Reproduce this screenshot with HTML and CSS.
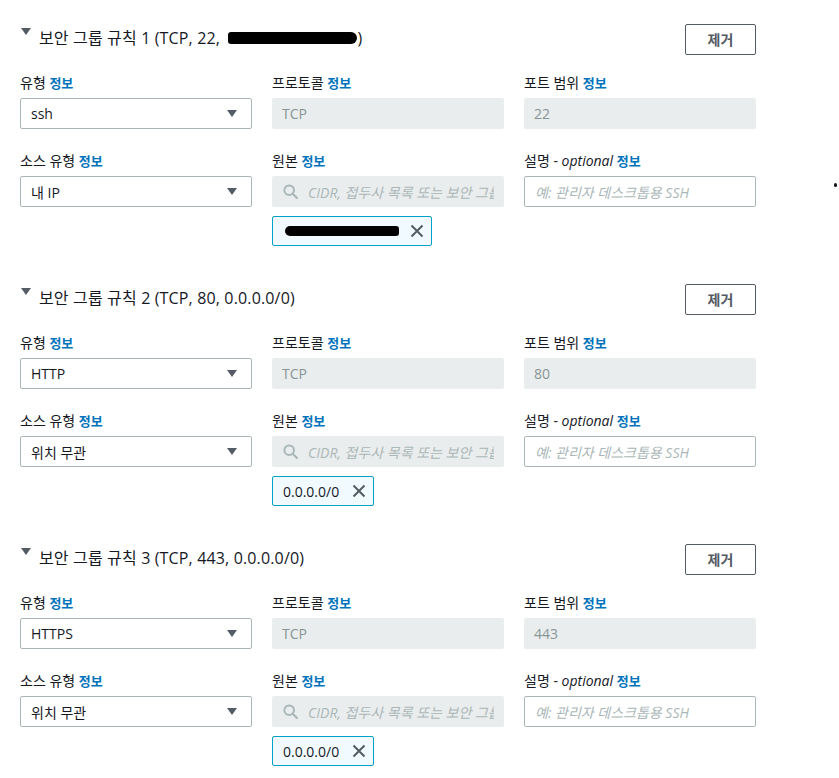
FILE: index.html
```html
<!DOCTYPE html>
<html lang="ko">
<head>
<meta charset="utf-8">
<title>보안 그룹 규칙</title>
<link rel="stylesheet" href="styles.css">
</head>
<body>
<div class="page">

  <section class="rule">
    <div class="rule-head">
      <div class="rule-title"><span class="caret"></span><span class="title-text">보안 그룹 규칙 1 (TCP, 22, <span class="redact redact-title"></span>)</span></div>
      <button class="btn">제거</button>
    </div>
    <div class="grid">
      <div class="field">
        <div class="label">유형 <span class="info">정보</span></div>
        <div class="select"><span class="value">ssh</span><svg class="dd" width="10" height="7" viewBox="0 0 10 7"><path d="M0 0H10L5 7Z" fill="#545b64"/></svg></div>
      </div>
      <div class="field">
        <div class="label">프로토콜 <span class="info">정보</span></div>
        <div class="disabled">TCP</div>
      </div>
      <div class="field">
        <div class="label">포트 범위 <span class="info">정보</span></div>
        <div class="disabled">22</div>
      </div>
      <div class="field">
        <div class="label">소스 유형 <span class="info">정보</span></div>
        <div class="select"><span class="value">내 IP</span><svg class="dd" width="10" height="7" viewBox="0 0 10 7"><path d="M0 0H10L5 7Z" fill="#545b64"/></svg></div>
      </div>
      <div class="field">
        <div class="label">원본 <span class="info">정보</span></div>
        <div class="search"><svg class="mag" width="15" height="15" viewBox="0 0 15 15"><circle cx="6.2" cy="6.2" r="4.8" fill="none" stroke="#aab7b8" stroke-width="2"/><path d="M9.7 9.7L14 14" stroke="#aab7b8" stroke-width="2.2" stroke-linecap="round"/></svg><span class="ph">CIDR, 접두사 목록 또는 보안 그룹</span></div>
        <div class="token token-wide"><span class="redact redact-token"></span><svg class="x" width="14" height="14" viewBox="0 0 14 14"><path d="M1.5 1.5L12.5 12.5M12.5 1.5L1.5 12.5" stroke="#545b64" stroke-width="2"/></svg></div>
      </div>
      <div class="field">
        <div class="label">설명 - <i>optional</i> <span class="info">정보</span></div>
        <div class="text-input"><span class="ph">예: 관리자 데스크톱용 SSH</span></div>
      </div>
    </div>
  </section>

  <section class="rule">
    <div class="rule-head">
      <div class="rule-title"><span class="caret"></span><span class="title-text">보안 그룹 규칙 2 (TCP, 80, 0.0.0.0/0)</span></div>
      <button class="btn">제거</button>
    </div>
    <div class="grid">
      <div class="field">
        <div class="label">유형 <span class="info">정보</span></div>
        <div class="select"><span class="value">HTTP</span><svg class="dd" width="10" height="7" viewBox="0 0 10 7"><path d="M0 0H10L5 7Z" fill="#545b64"/></svg></div>
      </div>
      <div class="field">
        <div class="label">프로토콜 <span class="info">정보</span></div>
        <div class="disabled">TCP</div>
      </div>
      <div class="field">
        <div class="label">포트 범위 <span class="info">정보</span></div>
        <div class="disabled">80</div>
      </div>
      <div class="field">
        <div class="label">소스 유형 <span class="info">정보</span></div>
        <div class="select"><span class="value">위치 무관</span><svg class="dd" width="10" height="7" viewBox="0 0 10 7"><path d="M0 0H10L5 7Z" fill="#545b64"/></svg></div>
      </div>
      <div class="field">
        <div class="label">원본 <span class="info">정보</span></div>
        <div class="search"><svg class="mag" width="15" height="15" viewBox="0 0 15 15"><circle cx="6.2" cy="6.2" r="4.8" fill="none" stroke="#aab7b8" stroke-width="2"/><path d="M9.7 9.7L14 14" stroke="#aab7b8" stroke-width="2.2" stroke-linecap="round"/></svg><span class="ph">CIDR, 접두사 목록 또는 보안 그룹</span></div>
        <div class="token"><span class="token-text">0.0.0.0/0</span><svg class="x" width="14" height="14" viewBox="0 0 14 14"><path d="M1.5 1.5L12.5 12.5M12.5 1.5L1.5 12.5" stroke="#545b64" stroke-width="2"/></svg></div>
      </div>
      <div class="field">
        <div class="label">설명 - <i>optional</i> <span class="info">정보</span></div>
        <div class="text-input"><span class="ph">예: 관리자 데스크톱용 SSH</span></div>
      </div>
    </div>
  </section>

  <section class="rule">
    <div class="rule-head">
      <div class="rule-title"><span class="caret"></span><span class="title-text">보안 그룹 규칙 3 (TCP, 443, 0.0.0.0/0)</span></div>
      <button class="btn">제거</button>
    </div>
    <div class="grid">
      <div class="field">
        <div class="label">유형 <span class="info">정보</span></div>
        <div class="select"><span class="value">HTTPS</span><svg class="dd" width="10" height="7" viewBox="0 0 10 7"><path d="M0 0H10L5 7Z" fill="#545b64"/></svg></div>
      </div>
      <div class="field">
        <div class="label">프로토콜 <span class="info">정보</span></div>
        <div class="disabled">TCP</div>
      </div>
      <div class="field">
        <div class="label">포트 범위 <span class="info">정보</span></div>
        <div class="disabled">443</div>
      </div>
      <div class="field">
        <div class="label">소스 유형 <span class="info">정보</span></div>
        <div class="select"><span class="value">위치 무관</span><svg class="dd" width="10" height="7" viewBox="0 0 10 7"><path d="M0 0H10L5 7Z" fill="#545b64"/></svg></div>
      </div>
      <div class="field">
        <div class="label">원본 <span class="info">정보</span></div>
        <div class="search"><svg class="mag" width="15" height="15" viewBox="0 0 15 15"><circle cx="6.2" cy="6.2" r="4.8" fill="none" stroke="#aab7b8" stroke-width="2"/><path d="M9.7 9.7L14 14" stroke="#aab7b8" stroke-width="2.2" stroke-linecap="round"/></svg><span class="ph">CIDR, 접두사 목록 또는 보안 그룹</span></div>
        <div class="token"><span class="token-text">0.0.0.0/0</span><svg class="x" width="14" height="14" viewBox="0 0 14 14"><path d="M1.5 1.5L12.5 12.5M12.5 1.5L1.5 12.5" stroke="#545b64" stroke-width="2"/></svg></div>
      </div>
      <div class="field">
        <div class="label">설명 - <i>optional</i> <span class="info">정보</span></div>
        <div class="text-input"><span class="ph">예: 관리자 데스크톱용 SSH</span></div>
      </div>
    </div>
  </section>

  <span class="speck"></span>
</div>
</body>
</html>
```

FILE: styles.css
```css
html, body {
  margin: 0;
  padding: 0;
  background: #ffffff;
}

body {
  font-family: "Open Sans", "Noto Sans CJK KR", sans-serif;
  color: #16191f;
  font-size: 14px;
}

.page {
  position: relative;
  padding: 24px 0 0 20px;
  width: 736px;
  display: flex;
  flex-direction: column;
  gap: 38px;
}

.rule {
  display: flex;
  flex-direction: column;
  gap: 17px;
}

.rule-head {
  display: flex;
  justify-content: space-between;
  align-items: center;
  height: 31px;
}

.rule-title {
  display: flex;
  align-items: flex-start;
  font-size: 16px;
  line-height: 22px;
  margin-top: -3px;
}

.caret {
  width: 0;
  height: 0;
  border-left: 5px solid transparent;
  border-right: 5px solid transparent;
  border-top: 7px solid #545b64;
  margin: 1px 8px 0 1px;
}

.title-text {
  white-space: nowrap;
  letter-spacing: 0.15px;
}

.redact {
  display: inline-block;
  background: #000000;
  vertical-align: middle;
}

.redact-title {
  width: 129px;
  height: 12px;
  border-radius: 3px 6px 6px 3px;
  margin: -3px 0 0 4px;
}

.btn {
  width: 71px;
  height: 31px;
  border: 1px solid #545b64;
  border-radius: 2px;
  background: #ffffff;
  color: #545b64;
  font-family: "Noto Sans CJK KR", sans-serif;
  font-size: 14px;
  font-weight: 700;
  padding: 0;
  margin-top: -1px;
}

.grid {
  display: grid;
  grid-template-columns: repeat(3, 232px);
  column-gap: 20px;
  row-gap: 21px;
  align-items: start;
}

.field {
  display: flex;
  flex-direction: column;
}

.label {
  line-height: 22px;
  height: 22px;
  margin-bottom: 4px;
  font-size: 14px;
  white-space: nowrap;
}

.label i {
  font-style: italic;
}

.info {
  color: #0073bb;
  font-weight: 700;
  font-size: 13px;
}

.select,
.disabled,
.search,
.text-input {
  box-sizing: border-box;
  height: 31px;
  border-radius: 2px;
  display: flex;
  align-items: center;
  font-size: 14px;
  white-space: nowrap;
  overflow: hidden;
}

.select {
  border: 1px solid #aab7b8;
  background: #ffffff;
  padding: 0 14px 0 10px;
  justify-content: space-between;
}

.select .value {
  color: #16191f;
}

.disabled {
  background: #eaeded;
  color: #879596;
  padding: 0 10px;
}

.search {
  background: #eaeded;
  padding: 0 10px 0 11px;
}

.mag {
  flex: none;
  margin-right: 10px;
}

.ph {
  color: #aab7b8;
  font-style: italic;
  overflow: hidden;
}

.text-input {
  border: 1px solid #aab7b8;
  background: #ffffff;
  padding: 0 10px;
}

.token {
  box-sizing: border-box;
  margin-top: 9px;
  height: 30px;
  width: 102px;
  border: 1px solid #00a1c9;
  border-radius: 2px;
  background: #f1faff;
  display: flex;
  align-items: center;
  justify-content: space-between;
  padding: 0 7px 0 10px;
}

.token-wide {
  width: 160px;
  padding-left: 12px;
}

.token-text {
  font-size: 14px;
  color: #16191f;
}

.redact-token {
  width: 114px;
  height: 10px;
  border-radius: 5px 3px 3px 5px;
}

.x {
  flex: none;
}

.speck {
  position: absolute;
  left: 834px;
  top: 183px;
  width: 3px;
  height: 4px;
  border-radius: 2px;
  background: #16191f;
}
```
